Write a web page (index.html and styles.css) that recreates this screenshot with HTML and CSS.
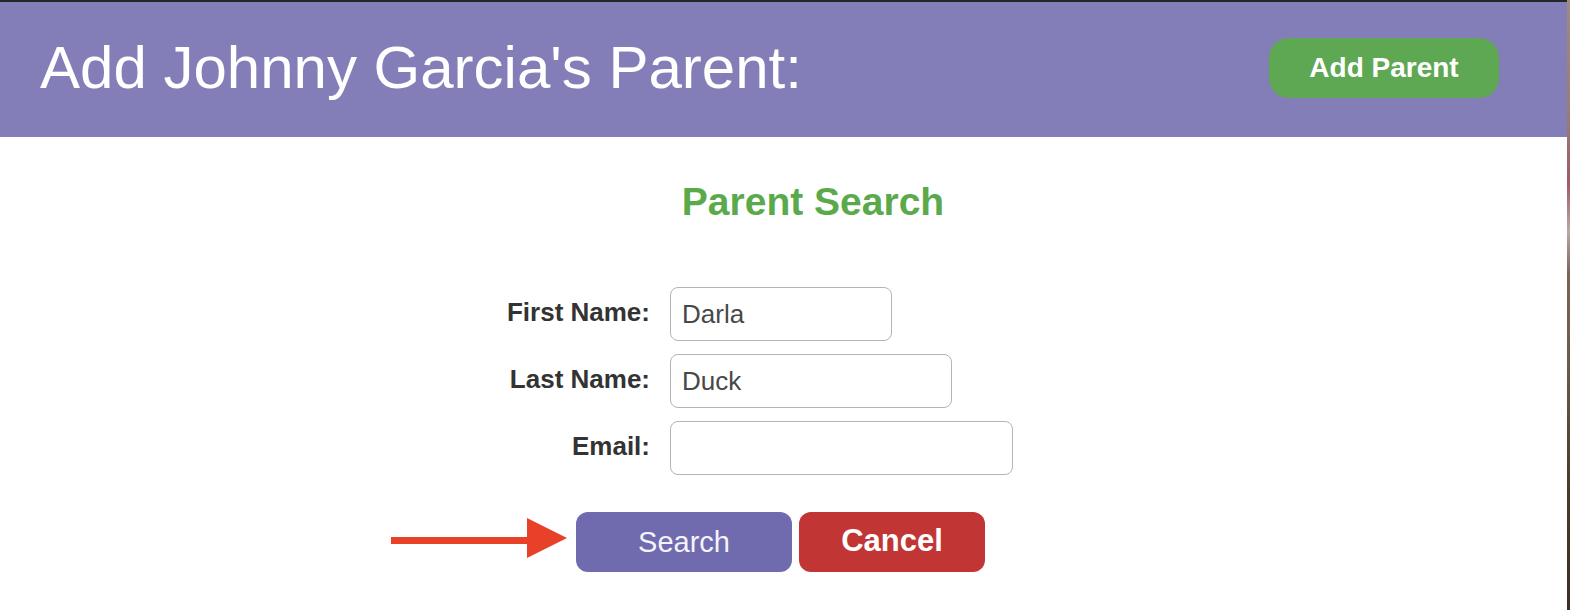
FILE: index.html
```html
<!DOCTYPE html>
<html lang="en">
<head>
<meta charset="utf-8">
<title>Add Parent</title>
<link rel="stylesheet" href="styles.css">
</head>
<body>
<div class="window">
  <div class="page">
    <div class="topbar"></div>
    <header class="header">
      <h1 class="title">Add Johnny Garcia's Parent:</h1>
      <button class="btn btn-add" type="button">Add Parent</button>
    </header>
    <main class="content">
      <div class="panel">
        <h2 class="panel-title">Parent Search</h2>
        <form class="form">
          <label class="label" for="fn">First Name:</label>
          <input class="field field-first" id="fn" type="text" value="Darla">
          <label class="label" for="ln">Last Name:</label>
          <input class="field field-last" id="ln" type="text" value="Duck">
          <label class="label" for="em">Email:</label>
          <input class="field field-email" id="em" type="text" value="">
        </form>
        <div class="actions">
          <svg class="arrow" width="176" height="42" viewBox="0 0 176 42" aria-hidden="true">
            <rect x="0" y="19" width="138" height="7" fill="#e8412a"/>
            <polygon points="136,0 176,20 136,40" fill="#e8412a"/>
          </svg>
          <button class="btn btn-search" type="button">Search</button>
          <button class="btn btn-cancel" type="button">Cancel</button>
        </div>
      </div>
    </main>
  </div>
  <div class="edge"></div>
</div>
</body>
</html>
```

FILE: styles.css
```css
* { box-sizing: border-box; }

html, body {
  margin: 0;
  padding: 0;
  background: #ffffff;
  font-family: "Liberation Sans", Arial, sans-serif;
}

.window {
  display: flex;
  width: 1570px;
  height: 610px;
  overflow: hidden;
}

.page {
  flex: 1;
  display: flex;
  flex-direction: column;
  background: #ffffff;
}

.edge {
  width: 3px;
  background: linear-gradient(to bottom, #a08a80 0%, #9a7a74 20%, #a05a64 30%, #b8a8a4 38%, #7a6456 45%, #6a5a4c 60%, #4a3a2a 80%, #3e2e22 100%);
}

.topbar {
  height: 2px;
  background: #262526;
}

.header {
  height: 135px;
  background: #837eb8;
  display: flex;
  align-items: center;
  justify-content: space-between;
  padding: 0 68px 0 40px;
}

.title {
  margin: 0 0 4px 0;
  font-size: 60px;
  line-height: 60px;
  font-weight: normal;
  color: #ffffff;
}

.btn {
  border: none;
  font-family: "Liberation Sans", Arial, sans-serif;
  color: #ffffff;
  cursor: pointer;
  padding: 0;
}

.btn-add {
  width: 230px;
  height: 60px;
  margin-bottom: 3px;
  border-radius: 20px;
  background: #5fa853;
  font-size: 28px;
  font-weight: bold;
}

.content {
  flex: 1;
}

.panel {
  margin-left: 392px;
  width: 842px;
  display: flex;
  flex-direction: column;
}

.panel-title {
  margin: 43px 0 0 0;
  text-align: center;
  font-size: 39px;
  line-height: 44px;
  font-weight: bold;
  color: #5aaa4c;
}

.form {
  margin-top: 63px;
  display: grid;
  grid-template-columns: 258px auto;
  column-gap: 20px;
  row-gap: 13px;
}

.label {
  justify-self: end;
  align-self: center;
  margin-bottom: 4px;
  font-size: 26px;
  font-weight: bold;
  color: #333333;
}

.field {
  justify-self: start;
  height: 54px;
  border: 1px solid #b4b4b4;
  border-radius: 8px;
  padding: 0 0 0 11px;
  font-family: "Liberation Sans", Arial, sans-serif;
  font-size: 26px;
  color: #484848;
  background: #ffffff;
  outline: none;
}

.field-first { width: 222px; }
.field-last { width: 282px; }
.field-email { width: 343px; }

.actions {
  margin-top: 37px;
  margin-left: -1px;
  display: flex;
  align-items: flex-start;
}

.arrow {
  display: block;
  margin-top: 6px;
  margin-right: 9px;
}

.btn-search {
  width: 216px;
  height: 60px;
  border-radius: 12px;
  background: #6f6bae;
  font-size: 29px;
  font-weight: normal;
  color: #f4f3fa;
}

.btn-cancel {
  width: 186px;
  height: 60px;
  margin-left: 7px;
  border-radius: 12px;
  background: #c23535;
  font-size: 31px;
  font-weight: bold;
  padding-bottom: 3px;
}
```
